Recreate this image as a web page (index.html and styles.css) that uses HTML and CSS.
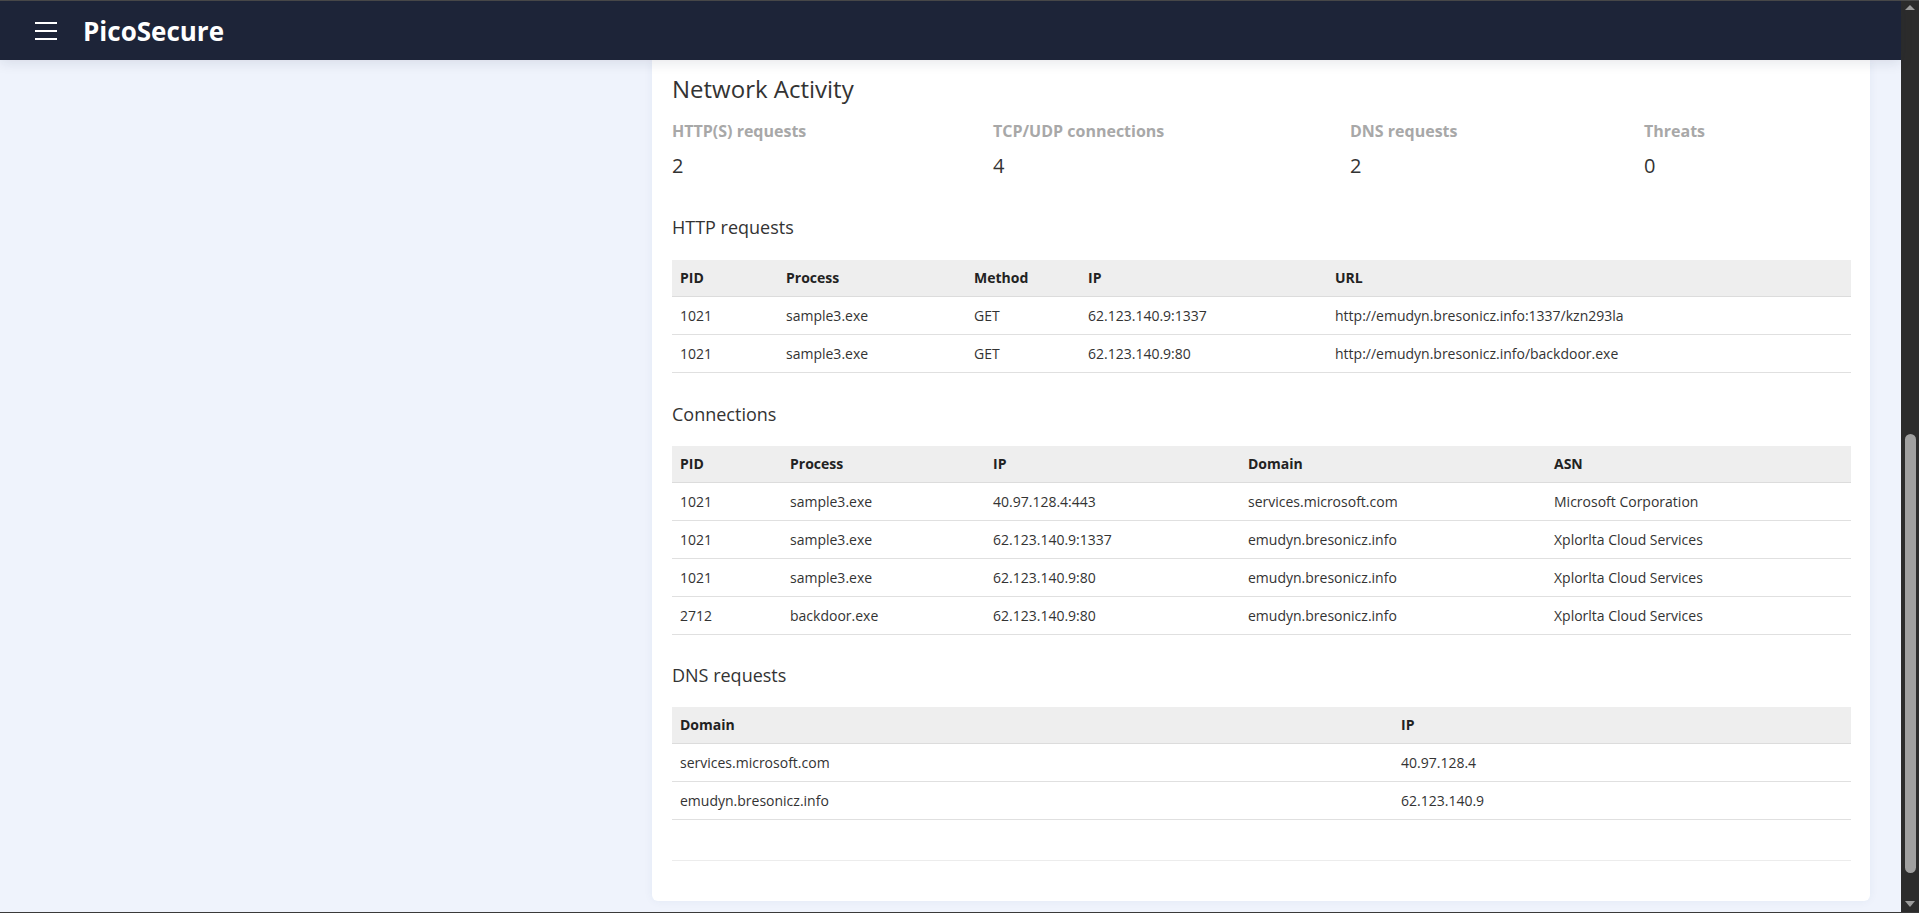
FILE: index.html
```html
<!DOCTYPE html>
<html lang="en">
<head>
<meta charset="utf-8">
<title>PicoSecure</title>
<link rel="stylesheet" href="styles.css">
</head>
<body>
<div class="window">
  <div class="page">
    <header class="topbar">
      <button class="menu-btn" aria-label="Menu">
        <span></span><span></span><span></span>
      </button>
      <div class="brand">PicoSecure</div>
    </header>
    <main class="content">
      <section class="card">
        <h2 class="card-title">Network Activity</h2>
        <div class="stats">
          <div class="stat"><div class="stat-label">HTTP(S) requests</div><div class="stat-value">2</div></div>
          <div class="stat"><div class="stat-label">TCP/UDP connections</div><div class="stat-value">4</div></div>
          <div class="stat"><div class="stat-label">DNS requests</div><div class="stat-value">2</div></div>
          <div class="stat"><div class="stat-label">Threats</div><div class="stat-value">0</div></div>
        </div>

        <h3 class="section-title first">HTTP requests</h3>
        <table class="data first">
          <colgroup><col class="h-pid"><col class="h-proc"><col class="h-method"><col class="h-ip"><col></colgroup>
          <thead><tr><th>PID</th><th>Process</th><th>Method</th><th>IP</th><th>URL</th></tr></thead>
          <tbody>
            <tr><td>1021</td><td>sample3.exe</td><td>GET</td><td>62.123.140.9:1337</td><td>http://emudyn.bresonicz.info:1337/kzn293la</td></tr>
            <tr><td>1021</td><td>sample3.exe</td><td>GET</td><td>62.123.140.9:80</td><td>http://emudyn.bresonicz.info/backdoor.exe</td></tr>
          </tbody>
        </table>

        <h3 class="section-title">Connections</h3>
        <table class="data">
          <colgroup><col class="c-pid"><col class="c-proc"><col class="c-ip"><col class="c-dom"><col></colgroup>
          <thead><tr><th>PID</th><th>Process</th><th>IP</th><th>Domain</th><th>ASN</th></tr></thead>
          <tbody>
            <tr><td>1021</td><td>sample3.exe</td><td>40.97.128.4:443</td><td>services.microsoft.com</td><td>Microsoft Corporation</td></tr>
            <tr><td>1021</td><td>sample3.exe</td><td>62.123.140.9:1337</td><td>emudyn.bresonicz.info</td><td>Xplorlta Cloud Services</td></tr>
            <tr><td>1021</td><td>sample3.exe</td><td>62.123.140.9:80</td><td>emudyn.bresonicz.info</td><td>Xplorlta Cloud Services</td></tr>
            <tr><td>2712</td><td>backdoor.exe</td><td>62.123.140.9:80</td><td>emudyn.bresonicz.info</td><td>Xplorlta Cloud Services</td></tr>
          </tbody>
        </table>

        <h3 class="section-title dns">DNS requests</h3>
        <table class="data last">
          <colgroup><col class="d-dom"><col></colgroup>
          <thead><tr><th>Domain</th><th>IP</th></tr></thead>
          <tbody>
            <tr><td>services.microsoft.com</td><td>40.97.128.4</td></tr>
            <tr><td>emudyn.bresonicz.info</td><td>62.123.140.9</td></tr>
          </tbody>
        </table>
        <div class="card-footer"></div>
      </section>
    </main>
  </div>
  <div class="scrollbar">
    <div class="sb-up"></div>
    <div class="sb-thumb"></div>
    <div class="sb-down"></div>
  </div>
</div>
</body>
</html>
```

FILE: styles.css
```css
* { box-sizing: border-box; }

html, body {
  margin: 0;
  padding: 0;
  height: 100%;
  overflow: hidden;
}

body {
  font-family: "Open Sans", "Noto Sans", "Liberation Sans", sans-serif;
  color: #333;
  background: #2c2c2c;
}

.window {
  height: 913px;
  display: flex;
  border-top: 1px solid #4a4a4a;
  border-bottom: 1px solid #3a3a3a;
}

.page {
  flex: 1;
  display: flex;
  flex-direction: column;
  min-width: 0;
  background: #eff3fc;
}

.topbar {
  height: 59px;
  flex: none;
  display: flex;
  align-items: center;
  padding-left: 35px;
  background: #1d2438;
  box-shadow: 0 3px 12px rgba(20, 30, 60, 0.10);
  position: relative;
  z-index: 2;
}

.menu-btn {
  width: 22px;
  height: 18px;
  padding: 0;
  border: 0;
  background: transparent;
  display: flex;
  flex-direction: column;
  justify-content: space-between;
  cursor: pointer;
}

.menu-btn span {
  display: block;
  height: 2px;
  background: #fff;
}

.brand {
  margin-left: 26px;
  font-size: 26px;
  line-height: 36px;
  font-weight: 700;
  color: #fff;
}

.content {
  flex: 1;
  display: flex;
  padding: 0 31px 11px 652px;
  min-height: 0;
}

.card {
  flex: 1;
  background: #fff;
  border-radius: 0 0 6px 6px;
  box-shadow: 0 0 10px rgba(40, 60, 120, 0.06);
  padding: 14px 19px 40px 20px;
}

.card-title {
  margin: 0;
  font-size: 24px;
  line-height: 30px;
  font-weight: 400;
  color: #333;
}

.stats {
  margin-top: 17px;
  display: grid;
  grid-template-columns: 321px 357px 294px 1fr;
}

.stat-label {
  font-size: 16px;
  line-height: 20px;
  font-weight: 700;
  color: #a8a8a8;
}

.stat-value {
  margin-top: 11px;
  font-size: 20px;
  line-height: 28px;
  color: #333;
}

.section-title {
  margin: 29px 0 0;
  font-size: 18px;
  line-height: 24px;
  font-weight: 400;
  color: #333;
}

.section-title.first {
  margin-top: 35px;
}

.section-title.dns {
  margin-top: 28px;
}

.data {
  width: 100%;
  margin-top: 20px;
  border-collapse: collapse;
  table-layout: fixed;
  font-size: 14px;
}

.data.first { margin-top: 21px; }
.data.last { margin-top: 20px; }

.data th {
  text-align: left;
  font-weight: 700;
  color: #222;
  background: #eeeeee;
  padding: 8px 8px;
  line-height: 20px;
  border-bottom: 1px solid #dcdcdc;
}

.data td {
  padding: 8px 8px;
  line-height: 21px;
  color: #333;
  border-bottom: 1px solid #e0e0e0;
  white-space: nowrap;
}

.h-pid { width: 106px; }
.h-proc { width: 188px; }
.h-method { width: 114px; }
.h-ip { width: 247px; }

.c-pid { width: 110px; }
.c-proc { width: 203px; }
.c-ip { width: 255px; }
.c-dom { width: 306px; }

.d-dom { width: 721px; }

.card-footer {
  height: 41px;
  border-bottom: 1px solid #ececec;
}

.scrollbar {
  width: 18px;
  flex: none;
  background: #2c2c2c;
  display: flex;
  flex-direction: column;
  align-items: center;
  padding: 4px 0 5px;
}

.sb-up {
  width: 0;
  height: 0;
  border-left: 5.5px solid transparent;
  border-right: 5.5px solid transparent;
  border-bottom: 5px solid #9c9c9c;
}

.sb-thumb {
  margin-top: auto;
  width: 11px;
  height: 439px;
  border-radius: 6px;
  background: #a0a0a0;
}

.sb-down {
  margin-top: 28px;
  width: 0;
  height: 0;
  border-left: 5.5px solid transparent;
  border-right: 5.5px solid transparent;
  border-top: 6px solid #9c9c9c;
}
```
